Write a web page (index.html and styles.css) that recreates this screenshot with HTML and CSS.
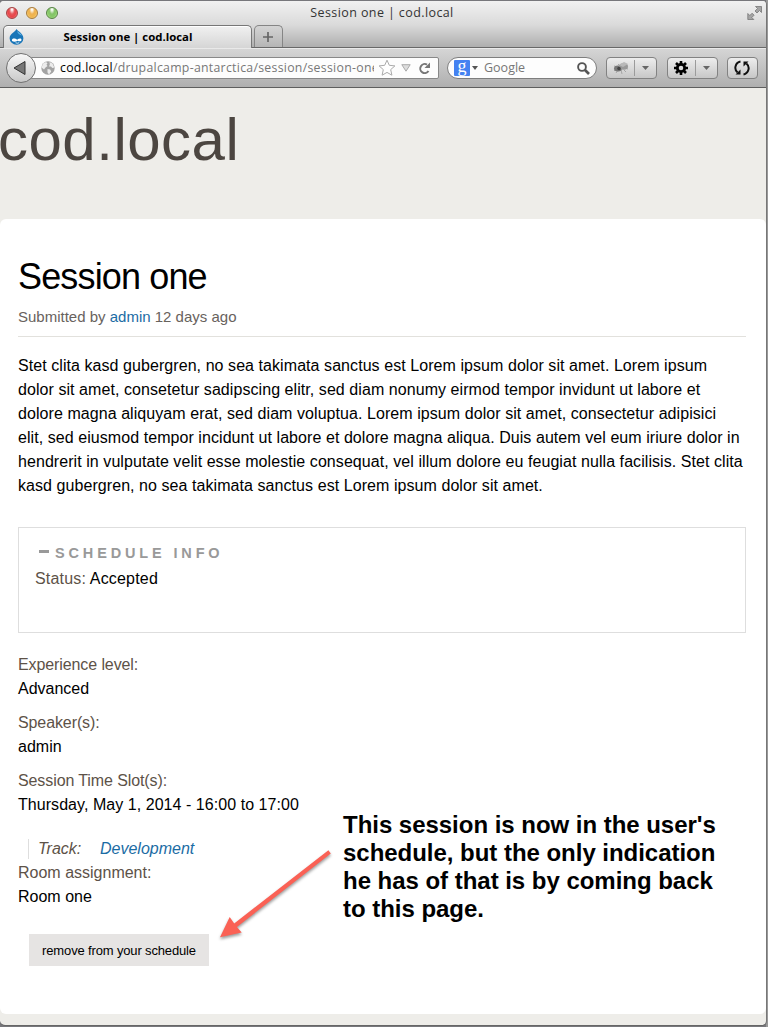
FILE: index.html
```html
<!DOCTYPE html>
<html lang="en">
<head>
<meta charset="utf-8">
<title>Session one | cod.local</title>
<link rel="stylesheet" href="styles.css">
</head>
<body>
<div class="window">
  <header class="titlebar">
    <div class="lights"><i class="light red"></i><i class="light amber"></i><i class="light green"></i></div>
    <div class="window-title">Session one | cod.local</div>
    <svg class="fullscreen" width="16" height="16" viewBox="0 0 16 16"><g fill="#a5a5a5" stroke="#777" stroke-width=".8"><path d="M8.500 1.500h6v6l-2-2-2.500 2.500-2-2 2.500-2.500z"/><path d="M.8 8.500v6h6l-2-2 2.300-2.300-2-2-2.300 2.300z"/></g></svg>
  </header>
  <div class="tabs">
    <div class="tab">
      <svg class="drop" width="16" height="16" viewBox="0 0 16 16"><path d="M7.500 0c1 2.300 6.900 4.200 6.900 9.200a6.900 6.600 0 0 1-13.800 0C.6 4.500 6.500 3 7.500 0z" fill="#1875b8"/><path d="M8.200 2c1.300 1.400 3.600 2.600 4.700 4.600-2-.9-4.200-1.500-4.700-4.600z" fill="#62b5e4"/><path d="M2.900 11.300c0-2.600 3.500-2 5.300-.6 1.600-1.300 4.200-1.800 4.300 0 0 2-2.300 1.700-3.900 1-2 1.500-5.700 1.400-5.700-.4z" fill="#fff"/><path d="M6.500 13.800q2 .9 3.700-.1" fill="none" stroke="#fff" stroke-width=".8"/></svg>
      <span>Session one | cod.local</span>
    </div>
    <div class="new-tab"><svg width="12" height="12" viewBox="0 0 12 12"><path d="M6 1v10M1 6h10" stroke="#666" stroke-width="1.700"/></svg></div>
  </div>
  <div class="toolbar">
    <div class="back"><svg width="13" height="16" viewBox="0 0 13 16"><path d="M12 1.500v13L1 8z" fill="#777" stroke="#333" stroke-width="1"/></svg></div>
    <div class="address">
      <svg width="14" height="14" viewBox="0 0 14 14"><circle cx="7" cy="7" r="6.700" fill="#a3a3a3"/><path d="M2 2.500l3-1.500 1.500 1.200-1 1.500 1 1.300-2 1.500-1.500 2-2.500-2zM8.500 1l3 1.500 1.800 4-2 .5-1.300-1.600-2 .2.800-2.200zM6.500 8l2.700.5 1 2-2.200 3-1.500-2z" fill="#ececec"/></svg>
      <div class="url"><b>cod.local</b>/drupalcamp-antarctica/session/session-one</div>
      <svg class="star" width="18" height="18" viewBox="0 0 18 18"><path d="M9 1.200l2.300 5.100 5.600.6-4.200 3.700 1.200 5.600L9 13.400l-4.900 2.800 1.200-5.600L1.100 6.900l5.600-.6z" fill="#fff" stroke="#aaa"/></svg>
      <svg class="drop-mark" width="10" height="8" viewBox="0 0 10 8"><path d="M.8.700h8.400L5 7.200z" fill="#ddd" stroke="#aaa"/></svg>
      <svg class="reload" width="13" height="13" viewBox="0 0 13 13"><path d="M9 2.600A4.500 4.500 0 1 0 10.500 9" fill="none" stroke="#777" stroke-width="2"/><path d="M12 .5V6H6.500z" fill="#777"/></svg>
    </div>
    <div class="search">
      <div class="engine">g</div>
      <svg width="6" height="4" viewBox="0 0 6 4"><path d="M0 0h6L3 4z" fill="#555"/></svg>
      <span>Google</span>
      <svg width="13" height="13" viewBox="0 0 13 13"><circle cx="5" cy="5" r="3.900" fill="none" stroke="#555" stroke-width="1.900"/><path d="M8 8l4 4" stroke="#555" stroke-width="2.600"/></svg>
    </div>
    <div class="tool split bug">
      <svg width="18" height="14" viewBox="0 0 18 14"><g fill="none" stroke="#999" stroke-width=".8"><path d="M6 6L2 5M8 5L6 3M13 7l3 1M12 9l2 2M9 9l1 4M6 9l-2 3M4 8L2 10"/></g><ellipse cx="6" cy="7.500" rx="4" ry="3" fill="#777"/><ellipse cx="11.500" cy="5.500" rx="4.500" ry="3.200" fill="#999"/><path d="M7 4l5-3 4 2-5 3z" fill="#b9b9b9"/><circle cx="7" cy="7.500" r="1.800" fill="#444"/></svg>
      <i></i><svg width="7" height="4" viewBox="0 0 7 4"><path d="M0 0h7L3.500 4z" fill="#666"/></svg>
    </div>
    <div class="tool split gear">
      <svg width="14" height="14" viewBox="0 0 14 14"><circle cx="7" cy="7" r="3.700" fill="none" stroke="#000" stroke-width="2.800"/><path d="M7 0v3M7 11v3M0 7h3M11 7h3M2 2l2 2M10 10l2 2M12 2l-2 2M4 10l-2 2" stroke="#000" stroke-width="2.600"/></svg>
      <i></i><svg width="7" height="4" viewBox="0 0 7 4"><path d="M0 0h7L3.500 4z" fill="#666"/></svg>
    </div>
    <div class="tool sync"><svg width="16" height="16" viewBox="0 0 16 16"><g fill="none" stroke="#111" stroke-width="2"><path d="M6.500 1.600A6.300 6.300 0 0 0 3.600 12.600"/><path d="M9.500 14.400A6.300 6.300 0 0 0 12.400 3.400"/></g><path d="M1.500 14.500h5v-5zM14.500 1.500h-5v5z" fill="#111"/></svg></div>
  </div>
  <div class="site-header"><div class="site-name">cod.local</div></div>
  <main class="content">
    <h1>Session one</h1>
    <div class="submitted">Submitted by <a>admin</a> 12 days ago</div>
    <p class="body">Stet clita kasd gubergren, no sea takimata sanctus est Lorem ipsum dolor sit amet. Lorem ipsum<br>dolor sit amet, consetetur sadipscing elitr, sed diam nonumy eirmod tempor invidunt ut labore et<br>dolore magna aliquyam erat, sed diam voluptua. Lorem ipsum dolor sit amet, consectetur adipisici<br>elit, sed eiusmod tempor incidunt ut labore et dolore magna aliqua. Duis autem vel eum iriure dolor in<br>hendrerit in vulputate velit esse molestie consequat, vel illum dolore eu feugiat nulla facilisis. Stet clita<br>kasd gubergren, no sea takimata sanctus est Lorem ipsum dolor sit amet.</p>
    <section class="schedule">
      <div class="legend"><i></i><span>SCHEDULE INFO</span></div>
      <div class="status"><span class="label">Status:</span> Accepted</div>
    </section>
    <div class="field"><div class="label">Experience level:</div><div>Advanced</div></div>
    <div class="field"><div class="label">Speaker(s):</div><div>admin</div></div>
    <div class="field slots"><div class="label">Session Time Slot(s):</div><div class="when">Thursday, May 1, 2014 - 16:00 to 17:00</div></div>
    <div class="track"><span class="label">Track:</span><a>Development</a></div>
    <div class="room"><div class="label">Room assignment:</div><div>Room one</div></div>
    <button class="remove">remove from your schedule</button>
  </main>
  <footer class="page-foot"></footer>
</div>
<div class="note">This session is now in the user's<br>schedule, but the only indication<br>he has of that is by coming back<br>to this page.</div>
<svg class="arrow" width="124" height="104" viewBox="0 0 124 104"><path d="M111.400 5.200L17.200 78.500 12.700 72 3 92.300 24.700 87.500 19.900 82 113.800 8.600z" fill="#fa6155"/></svg>
</body>
</html>
```
FILE: styles.css
```css
* { box-sizing: border-box; }
body { margin: 0; height: 1027px; padding-top: 1px; overflow: hidden; background: linear-gradient(90deg, #77777b 0 766px, #999 766px); font: 16px/24px "Liberation Sans", Arial, sans-serif; color: #000; }
svg { display: block; flex: none; }
.window { width: 767px; height: 1025px; overflow: hidden; background: #eeede9; border-radius: 4px 4px 5px 5px; border-right: 1px solid #777; border-bottom: 1px solid #666; background-clip: padding-box; display: flex; flex-direction: column; }
.titlebar, .tabs, .toolbar { font-family: "Open Sans", "Noto Sans", sans-serif; }
.titlebar { height: 24px; display: flex; align-items: center; background: linear-gradient(#f1f1f1, #dadada); padding: 0 3px 0 6px; }
.lights { display: flex; gap: 8px; width: 52px; }
.light { width: 12px; height: 12px; border-radius: 50%; border: 1px solid; }
.red { background: radial-gradient(ellipse at 50% 15%, #fff 5%, #e5575a 38%, #e94448 60%, #ff9d9d); border-color: #a34242; }
.amber { background: radial-gradient(ellipse at 50% 15%, #fff 5%, #eeb253 38%, #f0b54e 60%, #ffe79a); border-color: #a87b3c; }
.green { background: radial-gradient(ellipse at 50% 15%, #fff 5%, #85c36a 38%, #86c968 60%, #d2f5a6); border-color: #568344; }
.window-title { flex: 1; text-align: center; font-size: 12.500px; letter-spacing: .4px; color: #333; padding-right: 41px; }
.tabs { height: 23px; display: flex; background: linear-gradient(#dadada, #aeaeae); border-bottom: 1px solid #686868; }
.tab { width: 249px; height: 23px; border: 1px solid #777; border-bottom: 0; border-radius: 5px 5px 0 0; margin-left: 3px; background: linear-gradient(#f1f1f1, #d5d5d5); box-shadow: inset 0 1px #fff; display: flex; align-items: center; font-size: 11.400px; font-weight: 700; padding-left: 5px; flex: none; }
.tab span { flex: 1; text-align: center; padding-right: 20px; white-space: nowrap; }
.new-tab { width: 29px; height: 22px; margin-left: 2px; border: 1px solid #858585; border-bottom: 0; border-radius: 5px 5px 0 0; background: linear-gradient(#d4d4d4, #b5b5b5); padding: 5px 0 0 7px; }
.toolbar { height: 40px; display: flex; align-items: center; background: linear-gradient(#d5d5d5, #afafaf); border-top: 1px solid #e9e9e9; border-bottom: 1px solid #5e5e5e; padding-left: 6px; font-size: 12px; }
.back { width: 30px; height: 30px; border-radius: 50%; border: 1px solid #717171; background: linear-gradient(#f8f8f8, #c9c9c9); display: flex; align-items: center; padding-left: 6px; z-index: 1; flex: none; }
.address { width: 409px; height: 22px; margin-left: -6px; border: 1px solid #888; border-radius: 2px; background: #fdfdfd; display: flex; align-items: center; padding-left: 10px; color: #777; flex: none; }
.url { width: 314px; overflow: hidden; white-space: nowrap; margin-left: 5px; line-height: 20px; font-size: 12.300px; letter-spacing: .28px; }
.url b { font-weight: 400; color: #000; }
.star { margin-left: 4px; }
.drop-mark { margin-left: 5px; }
.reload { margin-left: 7px; }
.search { width: 150px; height: 22px; margin-left: 8px; border: 1px solid #7e7e7e; border-radius: 11px; background: #fdfdfd; display: flex; align-items: center; padding-left: 6px; flex: none; }
.engine { width: 16px; height: 16px; background: #4482f1; border-radius: 1px; color: #fff; font: 18px/12px "Liberation Serif", serif; text-align: center; margin-right: 2px; }
.search span { width: 99px; padding-left: 6px; color: #777; font-size: 12.500px; }
.tool { height: 22px; border: 1px solid #828282; border-radius: 4px; background: linear-gradient(#ededed, #c7c7c7); display: flex; align-items: center; flex: none; }
.split { width: 51px; margin-left: 9px; }
.gear { margin-left: 10px; padding-left: 6px; }
.split i { width: 1px; height: 16px; background: #9b9b9b; margin-left: 4px; }
.gear i { margin-left: 7px; }
.bug { padding-left: 5px; }
.split i + svg { margin-left: 7px; }
.sync { width: 31px; margin-left: 9px; padding-left: 6px; }
.site-header { height: 131px; background: #eeede9; padding-top: 17px; }
.site-name { font-size: 60px; line-height: 70px; color: #4c4641; margin-left: -2px; letter-spacing: .5px; }
.content { height: 795px; background: #fff; border-radius: 6px; padding: 37px 20px 0 18px; }
.content h1 { margin: 0; font-size: 36px; line-height: 42px; font-weight: 400; letter-spacing: -.85px; }
.submitted { margin-top: 7px; height: 32px; font-size: 15px; line-height: 24px; color: #68625d; border-bottom: 1px solid #e2e1dd; }
.content a { color: #1b6ca4; }
.body { margin: 17px 0 29px; white-space: nowrap; letter-spacing: .065px; }
.schedule { height: 106px; border: 1px solid #dedede; padding: 13px 16px 0; margin-bottom: 20px; }
.legend { display: flex; align-items: center; height: 24px; font-size: 14.500px; letter-spacing: 3.850px; color: #999; font-weight: 700; padding-left: 4px; }
.legend i { width: 10px; height: 3px; background: #999; margin: -3px 6px 0 0; }
.status { padding-top: 2px; letter-spacing: .18px; }
.label { color: #5d5248; }
.field { margin-bottom: 10px; }
.field .label { letter-spacing: -.1px; }
.slots { margin-bottom: 20px; }
.when { letter-spacing: .05px; }
.track { margin-left: 10px; font-style: italic; display: flex; position: relative; padding-left: 10px; }
.track::before { content: ""; position: absolute; left: 0; top: 2px; height: 20px; width: 1px; background: #dedede; }
.track .label { width: 62px; }
.remove { display: block; margin: 25px 0 0 11px; width: 180px; height: 32px; padding: 0; border: 0; background: #e6e4e3; font: 13px "Liberation Sans", Arial, sans-serif; letter-spacing: -.15px; color: #000; }
.page-foot { height: 11px; }
.note { position: absolute; left: 343px; top: 811px; font-size: 24px; line-height: 28px; font-weight: 700; white-space: nowrap; letter-spacing: -.03px; }
.arrow { position: absolute; left: 217px; top: 845px; filter: drop-shadow(0 2px 1.500px #0006); }
```
